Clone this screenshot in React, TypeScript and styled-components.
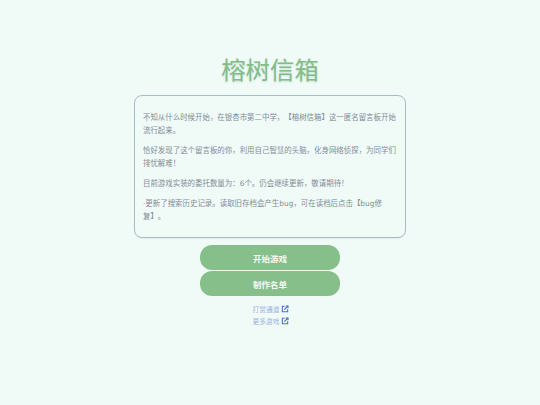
import React from "react";
import styled, { createGlobalStyle } from "styled-components";

const Global = createGlobalStyle`
  html, body { margin: 0; padding: 0; background: #f0fbf8; }
  body {
    font-family: "DejaVu Sans", "Noto Sans CJK SC", sans-serif;
    text-spacing-trim: space-all;
  }
`;

const Page = styled.main`
  width: 540px;
  height: 405px;
  overflow: hidden;
  display: flex;
  flex-direction: column;
  align-items: center;
  padding-top: 54px;
  box-sizing: border-box;
`;

const Title = styled.h1`
  margin: 0 0 7px;
  height: 34px;
  font-size: 24.4px;
  line-height: 34px;
  font-weight: 400;
  color: #84bc88;
  text-shadow: 0 1px 2px rgba(60, 120, 70, 0.22);
`;

const Card = styled.section`
  width: 272px;
  height: 143px;
  box-sizing: border-box;
  padding: 15px 8px 0;
  border: 1px solid #a9bac2;
  border-radius: 8px;
  box-shadow: 0 1px 1px rgba(0, 0, 0, 0.05);
  margin-bottom: 7px;
`;

const Para = styled.p`
  margin: 0 0 7px;
  font-size: 7.45px;
  line-height: 13px;
  color: #838c96;
`;

const Button = styled.button`
  display: block;
  width: 139.5px;
  height: 25px;
  margin-bottom: 1.3px;
  padding: 0;
  border: none;
  border-radius: 12px;
  background: #86bf8a;
  color: #f3fbf4;
  font: 700 8.5px "DejaVu Sans", "Noto Sans CJK SC", sans-serif;
`;

const Links = styled.nav`
  display: flex;
  flex-direction: column;
  align-items: center;
  margin-top: 5.5px;
`;

const LinkItem = styled.a`
  display: flex;
  align-items: center;
  gap: 1px;
  height: 11.8px;
  padding-left: 1px;
  font-size: 6.75px;
  color: #9db2e0;
  text-decoration: none;
  svg { color: #4a70c4; }
`;

const External = () => (
  <svg width="8" height="8" viewBox="0 0 24 24" fill="none" stroke="currentColor" strokeWidth="3.2">
    <path d="M11 4H4v16h16v-7" />
    <path d="M10 14 21 3" />
    <path d="M14 3h7v7" />
  </svg>
);

export default function App() {
  return (
    <Page>
      <Global />
      <Title>榕树信箱</Title>
      <Card>
        <Para>不知从什么时候开始，在银杏市第二中学，【榕树信箱】这一匿名留言板开始流行起来。</Para>
        <Para>恰好发现了这个留言板的你，利用自己智慧的头脑，化身网络侦探，为同学们排忧解难！</Para>
        <Para>目前游戏实装的委托数量为：6个。仍会继续更新，敬请期待！</Para>
        <Para>·更新了搜索历史记录。读取旧存档会产生bug，可在读档后点击【bug修复】。</Para>
      </Card>
      <Button>开始游戏</Button>
      <Button>制作名单</Button>
      <Links>
        <LinkItem href="#">打赏通道<External /></LinkItem>
        <LinkItem href="#">更多游戏<External /></LinkItem>
      </Links>
    </Page>
  );
}
